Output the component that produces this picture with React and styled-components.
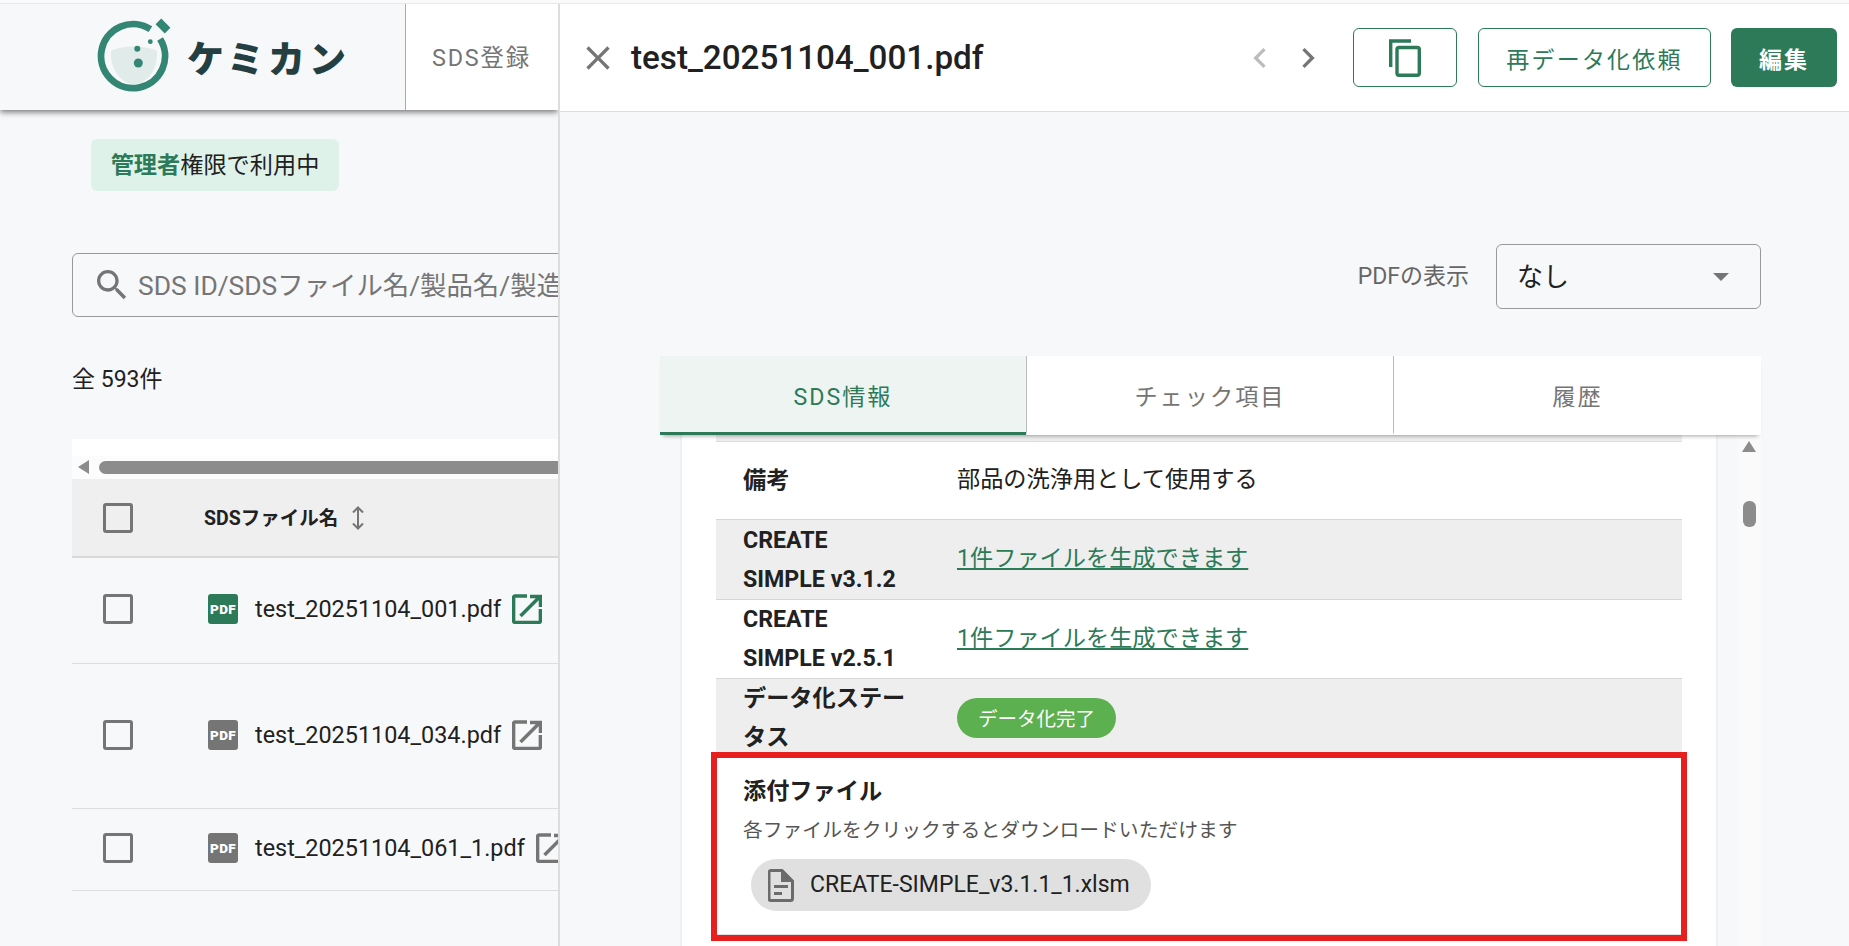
import React from "react";
import styled, { createGlobalStyle } from "styled-components";

const GREEN = "#2d7a59";
const GREY = "#757575";

const files = [
  { name: "test_20251104_001.pdf", height: 106, active: true },
  { name: "test_20251104_034.pdf", height: 145 },
  { name: "test_20251104_061_1.pdf", height: 82 },
];

const Logo = () => (
  <svg width="80" height="82" viewBox="0 0 80 82">
    <path d="M14 35C24 29 50 29 60 35C61 55 49 68 37 68C25 68 13 55 14 35Z" fill="#e1ecea" />
    <path d="M63.1 23A32 32 0 1 1 53.4 13.2" fill="none" stroke="#338574" strokeWidth="6.8" />
    <rect x="59.5" y="6" width="13" height="8" fill="#338574" transform="rotate(45 66 10)" />
    <circle cx="40.3" cy="32.7" r="3" fill="#338574" />
    <circle cx="41.3" cy="47" r="4.5" fill="#338574" />
    <circle cx="53.3" cy="25.7" r="2.4" fill="#338574" />
  </svg>
);

const MuiIcon = ({ d, color = GREY, size = 40 }) => (
  <svg width={size} height={size} viewBox="0 0 24 24" fill={color}>
    <path d={d} />
  </svg>
);

const ExternalIcon = ({ color }) => (
  <svg width="30" height="30" viewBox="0 0 30 30" fill="none" stroke={color} strokeWidth="3.5">
    <path d="M15 2H3a1.4 1.4 0 0 0-1.4 1.4V27a1.4 1.4 0 0 0 1.4 1.4H27a1.4 1.4 0 0 0 1.4-1.4V15" />
    <path d="M8.5 22 27 3.5M18 2.5h10.5V13" />
  </svg>
);

const SortIcon = () => (
  <svg width="12" height="24" viewBox="0 0 12 24" fill="none" stroke={GREY} strokeWidth="2">
    <path d="M6 1.5v21M1 6.5l5-5 5 5M1 17.5l5 5 5-5" />
  </svg>
);

const CopyIcon = () => (
  <svg width="32" height="38" viewBox="0 0 32 38" fill="none" stroke={GREEN} strokeWidth="3.4">
    <path d="M22 2H1.7V28" />
    <rect x="8" y="8.5" width="22.3" height="27.8" rx="2" />
  </svg>
);

const FileIcon = () => (
  <svg width="26" height="33" viewBox="0 0 26 33">
    <path d="M3 1.5H14L24.5 12V29.5a2 2 0 0 1-2 2H3a2 2 0 0 1-2-2V3.5a2 2 0 0 1 2-2Z" fill="none" stroke="#6b6b6b" strokeWidth="3" />
    <path d="M13 1H15L25 11V13H13Z" fill="#6b6b6b" />
    <path d="M6 16h14v3H6zM6 23h8v3H6z" fill="#6b6b6b" />
  </svg>
);

const App = () => (
  <Page>
    <GlobalStyle />
    <TopStrip />
    <Columns>
      <ListColumn>
        <Header>
          <LogoArea>
            <Logo />
            <LogoText>ケミカン</LogoText>
          </LogoArea>
          <NavItem>SDS登録</NavItem>
        </Header>
        <ListBody>
          <RoleBadge>
            <strong>管理者</strong>権限で利用中
          </RoleBadge>
          <SearchBox>
            <MuiIcon d="M15.5 14h-.79l-.28-.27C15.41 12.59 16 11.11 16 9.5 16 5.91 13.09 3 9.5 3S3 5.91 3 9.5 5.91 16 9.5 16c1.61 0 3.09-.59 4.23-1.57l.27.28v.79l5 4.99L20.49 19l-4.99-5zm-6 0C7.01 14 5 11.99 5 9.5S7.01 5 9.5 5 14 7.01 14 9.5 11.99 14 9.5 14z" />
            <SearchText>SDS ID/SDSファイル名/製品名/製造</SearchText>
          </SearchBox>
          <Count>全 593件</Count>
          <ScrollStrip>
            <ArrowLeft />
            <ThumbH />
          </ScrollStrip>
          <HeadRow>
            <CheckCell>
              <Checkbox />
            </CheckCell>
            <HeadLabel>SDSファイル名</HeadLabel>
            <SortIcon />
          </HeadRow>
          {files.map((f) => (
            <FileRow key={f.name} $height={f.height}>
              <CheckCell>
                <Checkbox />
              </CheckCell>
              <PdfBadge $active={f.active}>PDF</PdfBadge>
              <FileName>{f.name}</FileName>
              <ExternalIcon color={f.active ? GREEN : GREY} />
            </FileRow>
          ))}
        </ListBody>
      </ListColumn>

      <Drawer>
        <DrawerHeader>
          <MuiIcon d="M19 6.41 17.59 5 12 10.59 6.41 5 5 6.41 10.59 12 5 17.59 6.41 19 12 13.41 17.59 19 19 17.59 13.41 12z" />
          <DrawerTitle>test_20251104_001.pdf</DrawerTitle>
          <Pager>
            <MuiIcon d="M15.41 7.41 14 6l-6 6 6 6 1.41-1.41L10.83 12z" color="#bdbdbd" />
            <MuiIcon d="M10 6 8.59 7.41 13.17 12l-4.58 4.59L10 18l6-6z" />
          </Pager>
          <OutlineButton $width={104}>
            <CopyIcon />
          </OutlineButton>
          <OutlineButton $width={233}>再データ化依頼</OutlineButton>
          <SolidButton>編集</SolidButton>
        </DrawerHeader>
        <DrawerBody>
          <PdfRow>
            <PdfLabel>PDFの表示</PdfLabel>
            <SelectBox>
              <SelectValue>なし</SelectValue>
              <Caret />
            </SelectBox>
          </PdfRow>
          <Tabs>
            <Tab $active>SDS情報</Tab>
            <Tab>チェック項目</Tab>
            <Tab>履歴</Tab>
          </Tabs>
          <ContentRow>
            <Card>
              <PreviousRow />
              <DetailRow>
                <DetailLabel>備考</DetailLabel>
                <DetailValue>部品の洗浄用として使用する</DetailValue>
              </DetailRow>
              <DetailRow $shaded $height={80}>
                <DetailLabel>CREATE SIMPLE&nbsp;v3.1.2</DetailLabel>
                <DetailLink>1件ファイルを生成できます</DetailLink>
              </DetailRow>
              <DetailRow>
                <DetailLabel>CREATE SIMPLE&nbsp;v2.5.1</DetailLabel>
                <DetailLink>1件ファイルを生成できます</DetailLink>
              </DetailRow>
              <DetailRow $shaded>
                <DetailLabel>データ化ステータス</DetailLabel>
                <StatusChip>データ化完了</StatusChip>
              </DetailRow>
              <AttachRow>
                <AttachTitle>添付ファイル</AttachTitle>
                <AttachHint>各ファイルをクリックするとダウンロードいただけます</AttachHint>
                <FileChip>
                  <FileIcon />
                  <span>CREATE-SIMPLE_v3.1.1_1.xlsm</span>
                </FileChip>
                <RedFrame />
              </AttachRow>
            </Card>
            <ScrollTrack>
              <ArrowUp />
              <ThumbV />
            </ScrollTrack>
          </ContentRow>
        </DrawerBody>
      </Drawer>
    </Columns>
  </Page>
);

export default App;

const GlobalStyle = createGlobalStyle`
  html, body {
    margin: 0;
    padding: 0;
    background: #f7f8fa;
    overflow: hidden;
  }
  * {
    box-sizing: border-box;
  }
  body {
    font-family: Roboto, "Noto Sans CJK JP", sans-serif;
    color: #212121;
  }
`;

const Page = styled.div`
  width: 1849px;
  height: 946px;
  display: flex;
  flex-direction: column;
  overflow: hidden;
`;

const TopStrip = styled.div`
  height: 4px;
  flex: none;
  background: #fafafa;
  border-bottom: 1px solid #ece8e8;
`;

const Columns = styled.div`
  flex: 1;
  min-height: 0;
  display: flex;
`;

const ListColumn = styled.div`
  width: 558px;
  flex: none;
  overflow: hidden;
`;

const Header = styled.header`
  height: 106px;
  display: flex;
  background: #fff;
  box-shadow: 0 2px 6px rgba(0, 0, 0, 0.55);
`;

const LogoArea = styled.div`
  width: 406px;
  flex: none;
  display: flex;
  align-items: center;
  padding: 0 0 0 97px;
  gap: 10px;
  background: #f7f8fa;
  border-right: 1px solid #aaa;
`;

const LogoText = styled.span`
  font-family: "Noto Sans CJK JP", sans-serif;
  font-weight: 900;
  font-size: 37px;
  letter-spacing: 4px;
  color: #233f42;
  white-space: nowrap;
`;

const NavItem = styled.div`
  display: flex;
  align-items: center;
  padding-left: 26px;
  padding-bottom: 2px;
  font-size: 23.4px;
  letter-spacing: 1.8px;
  color: ${GREY};
  white-space: nowrap;
`;

const ListBody = styled.div`
  padding: 29px 0 0 72px;
`;

const RoleBadge = styled.div`
  width: 248px;
  height: 52px;
  margin-left: 19px;
  padding-bottom: 4px;
  display: flex;
  align-items: center;
  justify-content: center;
  background: #dff2ea;
  border-radius: 6px;
  font-size: 23.2px;
  white-space: nowrap;
  strong {
    font-weight: 700;
    color: ${GREEN};
  }
`;

const SearchBox = styled.div`
  width: 900px;
  height: 64px;
  margin-top: 62px;
  padding: 0 0 4px 19px;
  display: flex;
  align-items: center;
  gap: 6px;
  border: 1px solid #999;
  border-radius: 6px;
  svg {
    margin-top: 4px;
  }
`;

const SearchText = styled.span`
  font-size: 26.4px;
  color: ${GREY};
  white-space: nowrap;
`;

const Count = styled.div`
  margin-top: 48px;
  height: 30px;
  line-height: 30px;
  font-size: 23px;
`;

const ScrollStrip = styled.div`
  margin-top: 44px;
  height: 40px;
  padding: 0 0 5px 6px;
  display: flex;
  align-items: flex-end;
  gap: 10px;
  background: linear-gradient(#fff 0 42%, #fcfcfc 42%);
`;

const ArrowLeft = styled.span`
  width: 0;
  height: 0;
  border-style: solid;
  border-width: 7px 11px 7px 0;
  border-color: transparent #8c8c8c transparent transparent;
`;

const ThumbH = styled.span`
  flex: 1;
  height: 13px;
  background: #8c8c8c;
  border-radius: 7px 0 0 7px;
`;

const HeadRow = styled.div`
  height: 79px;
  display: flex;
  align-items: center;
  background: #efefef;
  border-bottom: 2px solid #d9d9d9;
`;

const CheckCell = styled.div`
  width: 132px;
  flex: none;
  padding-left: 31px;
  display: flex;
`;

const Checkbox = styled.span`
  width: 30px;
  height: 30px;
  border: 3.4px solid ${GREY};
  border-radius: 3px;
`;

const HeadLabel = styled.span`
  padding-bottom: 3px;
  font-size: 19.5px;
  font-weight: 700;
  margin-right: 14px;
  white-space: nowrap;
`;

const FileRow = styled.div`
  height: ${(p) => p.$height}px;
  padding-bottom: 3px;
  display: flex;
  align-items: center;
  border-bottom: 1px solid #ddd;
  white-space: nowrap;
  svg {
    flex: none;
  }
`;

const PdfBadge = styled.span`
  width: 30px;
  height: 30px;
  flex: none;
  margin: 0 17px 0 4px;
  display: flex;
  align-items: center;
  justify-content: center;
  background: ${(p) => (p.$active ? GREEN : GREY)};
  border-radius: 3px;
  color: #fff;
  font-size: 13.5px;
  font-weight: 900;
  letter-spacing: 0.4px;
`;

const FileName = styled.span`
  font-size: 23.4px;
  margin-right: 11px;
`;

const Drawer = styled.div`
  flex: 1;
  min-width: 0;
  display: flex;
  flex-direction: column;
  border-left: 2px solid #ddd;
  position: relative;
`;

const DrawerHeader = styled.div`
  height: 108px;
  flex: none;
  display: flex;
  align-items: center;
  padding: 0 12px 0 18px;
  background: #fff;
  border-bottom: 1px solid #ddd;
`;

const DrawerTitle = styled.h1`
  margin: 0 0 0 13px;
  font-size: 33.2px;
  font-weight: 500;
  white-space: nowrap;
`;

const Pager = styled.div`
  margin-left: auto;
  margin-right: 4px;
  display: flex;
  gap: 8px;
`;

const OutlineButton = styled.button`
  width: ${(p) => p.$width}px;
  height: 59px;
  margin-left: 21px;
  display: flex;
  align-items: center;
  justify-content: center;
  background: #fff;
  border: 1.5px solid ${GREEN};
  border-radius: 6px;
  color: ${GREEN};
  font-family: inherit;
  font-size: 23px;
  letter-spacing: 2.2px;
  padding: 0;
`;

const SolidButton = styled.button`
  width: 106px;
  height: 59px;
  margin-left: 20px;
  background: ${GREEN};
  border: none;
  border-radius: 6px;
  color: #fff;
  font-family: inherit;
  font-size: 23px;
  font-weight: 700;
  letter-spacing: 2px;
  padding: 0;
`;

const DrawerBody = styled.div`
  flex: 1;
  min-height: 0;
  display: flex;
  flex-direction: column;
  background: #f7f8fa;
`;

const PdfRow = styled.div`
  margin-top: 132px;
  padding-right: 88px;
  display: flex;
  align-items: center;
  justify-content: flex-end;
  gap: 27px;
`;

const PdfLabel = styled.span`
  padding-bottom: 6px;
  font-size: 23px;
  color: #666;
`;

const SelectBox = styled.div`
  width: 265px;
  height: 65px;
  padding: 0 31px 0 20px;
  display: flex;
  align-items: center;
  justify-content: space-between;
  border: 1px solid #999;
  border-radius: 6px;
`;

const SelectValue = styled.span`
  padding-bottom: 4px;
  font-size: 26px;
`;

const Caret = styled.span`
  width: 0;
  height: 0;
  border-style: solid;
  border-width: 8px 8.5px 0;
  border-color: ${GREY} transparent transparent;
`;

const Tabs = styled.div`
  margin: 47px 88px 0 100px;
  height: 79px;
  flex: none;
  display: grid;
  grid-template-columns: 366px 367px 1fr;
  background: #fff;
  box-shadow: 0 4px 4px -3px rgba(0, 0, 0, 0.35);
  position: relative;
  z-index: 1;
`;

const Tab = styled.div`
  padding-top: 2px;
  display: flex;
  align-items: center;
  justify-content: center;
  font-size: 23.2px;
  letter-spacing: 2px;
  color: ${(p) => (p.$active ? GREEN : GREY)};
  background: ${(p) => (p.$active ? "#eef4f1" : "transparent")};
  border-bottom: 3px solid ${(p) => (p.$active ? GREEN : "transparent")};
  & + & {
    border-left: 1px solid #bbb;
  }
`;

const ContentRow = styled.div`
  flex: 1;
  min-height: 0;
  margin: 0 88px 0 120px;
  display: flex;
`;

const Card = styled.div`
  width: 1038px;
  flex: none;
  padding: 0 34px;
  background: #fff;
  border-left: 2px solid #f0f0f0;
  border-right: 2px solid #f0f0f0;
`;

const PreviousRow = styled.div`
  height: 7px;
  background: #eee;
  border-bottom: 1.5px solid #ddd;
`;

const DetailRow = styled.div`
  min-height: ${(p) => p.$height || 78}px;
  padding: 0 27px;
  display: flex;
  align-items: center;
  background: ${(p) => (p.$shaded ? "#eee" : "#fff")};
  border-bottom: 1px solid #d6d6d6;
`;

const DetailLabel = styled.div`
  width: 214px;
  flex: none;
  padding-right: 34px;
  font-size: 23.2px;
  font-weight: 700;
  line-height: 39px;
`;

const DetailValue = styled.div`
  padding-bottom: 8px;
  font-size: 23.2px;
`;

const DetailLink = styled.a`
  padding-bottom: 7px;
  font-size: 23.2px;
  color: ${GREEN};
  text-decoration: underline;
`;

const StatusChip = styled.span`
  width: 159px;
  height: 40px;
  padding-bottom: 2px;
  display: flex;
  align-items: center;
  justify-content: center;
  background: #5cb04f;
  border-radius: 20px;
  color: #fff;
  font-size: 19.5px;
`;

const AttachRow = styled.div`
  position: relative;
  height: 177px;
  padding: 18px 27px 0;
  background: #fff;
  border-bottom: 1px solid #e0e0e0;
`;

const AttachTitle = styled.div`
  font-size: 23.2px;
  font-weight: 700;
  line-height: 30px;
`;

const AttachHint = styled.div`
  margin-top: 11px;
  font-size: 19.8px;
  line-height: 28px;
  color: #555;
`;

const FileChip = styled.div`
  width: 400px;
  height: 52px;
  margin: 14px 0 0 8px;
  padding-left: 17px;
  display: flex;
  align-items: center;
  gap: 16px;
  background: #e0e0e0;
  border-radius: 26px;
  font-size: 23px;
  white-space: nowrap;
  span {
    padding-bottom: 2px;
  }
`;

/* callout drawn over the row in the screenshot */
const RedFrame = styled.div`
  position: absolute;
  inset: -6px -5px -7px -5px;
  border: 6px solid #e81f1f;
  pointer-events: none;
`;

const ScrollTrack = styled.div`
  width: 24px;
  margin-left: 19px;
  padding-top: 6px;
  display: flex;
  flex-direction: column;
  align-items: center;
  background: #fafafa;
`;

const ArrowUp = styled.span`
  width: 0;
  height: 0;
  border-style: solid;
  border-width: 0 7.5px 11px;
  border-color: transparent transparent #8c8c8c;
`;

const ThumbV = styled.span`
  width: 13px;
  height: 26px;
  margin-top: 49px;
  background: #8c8c8c;
  border-radius: 6px;
`;
